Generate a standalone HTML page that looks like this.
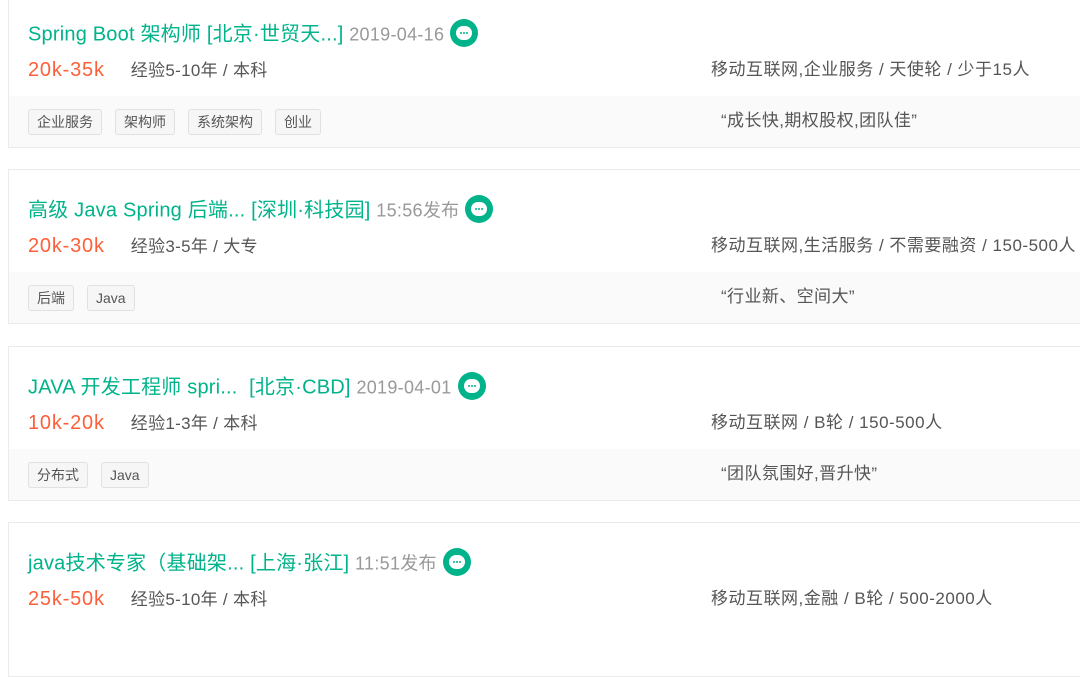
<!DOCTYPE html>
<html><head><meta charset="utf-8"><style>
*{margin:0;padding:0;box-sizing:border-box}
body{width:1080px;height:610px;overflow:hidden;background:#fff;font-family:"Liberation Sans","Noto Sans CJK SC",sans-serif;position:relative}
.card{position:absolute;left:8px;width:1090px;height:155px;border:1px solid #ebebeb;background:#fff}
.t{position:absolute;left:19px;top:27px;font-size:20px;letter-spacing:0.2px;color:#00b38a;white-space:nowrap;line-height:26px}
.t .d{color:#999;font-size:18px;letter-spacing:0.3px}
.ic{display:inline-block;width:28px;height:28px;border-radius:50%;background:#00b38a;vertical-align:middle;position:relative;margin-left:6px;top:-2px}
.ic:after{content:"";position:absolute;left:6px;top:7px;width:16px;height:14px;border-radius:7px;background:#fff}
.ic i{position:absolute;top:13px;width:2px;height:2px;background:#00b38a;z-index:2;border-radius:1px}
.s{position:absolute;left:19px;top:63px;font-size:20px;letter-spacing:0.8px;color:#fd5f39;line-height:26px;white-space:nowrap}
.s span{color:#555;font-size:17px;margin-left:26px;letter-spacing:0.3px}
.r{position:absolute;left:702px;top:64px;font-size:17px;letter-spacing:0.5px;color:#555;line-height:24px;white-space:nowrap}
.band{position:absolute;left:0;top:102px;width:100%;height:51px;background:#fafafa}
.tags{position:absolute;left:19px;top:13px;display:flex;gap:13px}
.tag{height:26px;line-height:24px;padding:0 8px;border:1px solid #e1e1e1;border-radius:3px;background:#f6f6f6;font-size:14px;color:#555}
.q{position:absolute;left:712px;top:13px;font-size:17px;letter-spacing:0.4px;color:#555;line-height:24px}
</style></head><body>

<div class="card" style="top:-7px">
<div class="t">Spring Boot 架构师 [北京·世贸天...] <span class="d">2019-04-16</span><span class="ic"><i style="left:10px"></i><i style="left:13px"></i><i style="left:16px"></i></span></div>
<div class="s">20k-35k<span>经验5-10年 / 本科</span></div>
<div class="r">移动互联网,企业服务 / 天使轮 / 少于15人</div>
<div class="band"><div class="tags"><div class="tag">企业服务</div><div class="tag">架构师</div><div class="tag">系统架构</div><div class="tag">创业</div></div><div class="q">“成长快,期权股权,团队佳”</div></div>
</div>

<div class="card" style="top:169px">
<div class="t">高级 Java Spring 后端...&nbsp;[深圳·科技园] <span class="d">15:56发布</span><span class="ic"><i style="left:10px"></i><i style="left:13px"></i><i style="left:16px"></i></span></div>
<div class="s">20k-30k<span>经验3-5年 / 大专</span></div>
<div class="r">移动互联网,生活服务 / 不需要融资 / 150-500人</div>
<div class="band"><div class="tags"><div class="tag">后端</div><div class="tag">Java</div></div><div class="q">“行业新、空间大”</div></div>
</div>

<div class="card" style="top:346px">
<div class="t">JAVA 开发工程师 spri...&nbsp; [北京·CBD] <span class="d">2019-04-01</span><span class="ic"><i style="left:10px"></i><i style="left:13px"></i><i style="left:16px"></i></span></div>
<div class="s">10k-20k<span>经验1-3年 / 本科</span></div>
<div class="r">移动互联网 / B轮 / 150-500人</div>
<div class="band"><div class="tags"><div class="tag">分布式</div><div class="tag">Java</div></div><div class="q">“团队氛围好,晋升快”</div></div>
</div>

<div class="card" style="top:522px">
<div class="t">java技术专家（基础架...&nbsp;[上海·张江] <span class="d">11:51发布</span><span class="ic"><i style="left:10px"></i><i style="left:13px"></i><i style="left:16px"></i></span></div>
<div class="s">25k-50k<span>经验5-10年 / 本科</span></div>
<div class="r">移动互联网,金融 / B轮 / 500-2000人</div>
</div>

</body></html>
